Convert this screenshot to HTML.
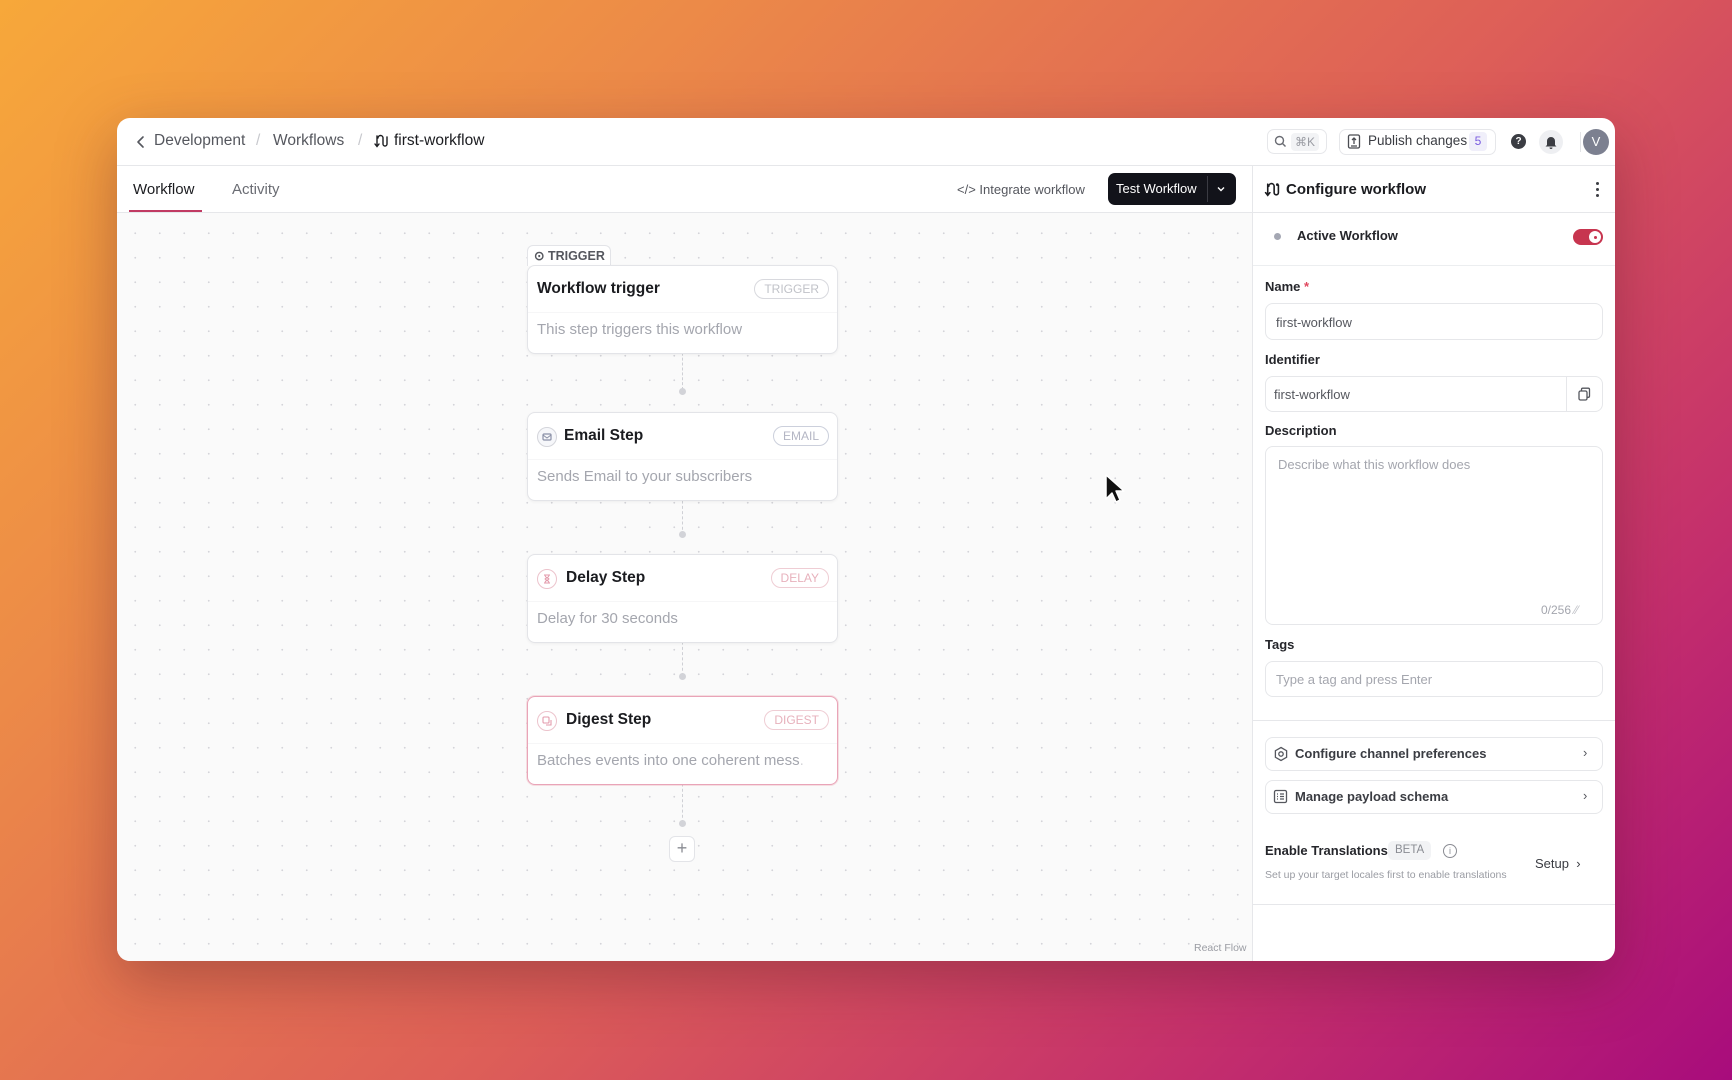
<!DOCTYPE html>
<html><head><meta charset="utf-8"><style>
*{box-sizing:border-box;margin:0;padding:0}
body{width:1732px;height:1080px;overflow:hidden;position:relative;font-family:"Liberation Sans",sans-serif;
background:linear-gradient(135deg,#f7a83a 0%,#ec8a48 25%,#dd5e58 55%,#c42f6c 80%,#a80c7c 100%);}
.a{position:absolute}
.win{position:absolute;left:117px;top:118px;width:1498px;height:843px;background:#fff;border-radius:13px;overflow:hidden;box-shadow:0 20px 60px rgba(80,20,40,.35)}
.t{position:absolute;white-space:nowrap}
.canvas{position:absolute;left:0;top:95px;width:1135px;height:748px;overflow:hidden;background-color:#fafafa;
background-image:radial-gradient(circle,#d4d4d9 0.8px,transparent 1.1px);background-size:24.5px 24.5px;background-position:6px 8px}
.card{position:absolute;left:410px;width:311px;height:89px;background:#fff;border:1px solid #e3e4e8;border-radius:8px;box-shadow:0 1px 3px rgba(0,0,0,.05)}
.card .ti{position:absolute;left:9px;top:14px;font-size:15.5px;font-weight:bold;color:#1b1c20}
.card .de{position:absolute;left:9px;top:55px;font-size:15px;color:#a4a6ae}
.card .bd{position:absolute;right:8px;top:13px;height:20px;padding:0 9px;border:1px solid #d8d9de;border-radius:10px;font-size:12px;line-height:18px;color:#c0c2c8}
.card .ic{position:absolute;left:9px;top:14px;width:20px;height:20px;border:1px solid #d4d5db;border-radius:50%}
.card .ic svg{position:absolute;left:4px;top:4px}
.card .sep{position:absolute;left:0;right:0;top:46px;height:1px;background:#f6f6f7}
.vl{position:absolute;left:565px;width:0;border-left:1.5px dashed #cfd0d5}
.dot{position:absolute;left:562px;width:7px;height:7px;border-radius:50%;background:#d2d3d8}
.lbl{position:absolute;left:1148px;font-size:13px;font-weight:bold;color:#25262b}
.inp{position:absolute;left:1148px;width:338px;border:1px solid #e6e7ea;border-radius:8px;background:#fff;font-size:13px;color:#55575e}
</style></head><body>
<div class="win">
 <svg class="a" style="left:17px;top:16px" width="14" height="16" viewBox="0 0 14 16"><path d="M9 3L4 8l5 5" fill="none" stroke="#55575e" stroke-width="1.6" stroke-linecap="round" stroke-linejoin="round"/></svg>
 <div class="t" style="left:37px;top:14px;font-size:15.5px;color:#55575e">Development</div>
 <div class="t" style="left:139px;top:14px;font-size:15.5px;color:#c7c8cd">/</div>
 <div class="t" style="left:156px;top:14px;font-size:15.5px;color:#55575e">Workflows</div>
 <div class="t" style="left:241px;top:14px;font-size:15.5px;color:#c7c8cd">/</div>
 <svg class="a" style="left:257px;top:16px" width="14" height="15" viewBox="0 0 14 15"><path d="M3 2v10M1 10l2 2.5L5 10M4 4a2.5 2.5 0 015 0v6a2 2 0 004 0V3" fill="none" stroke="#1b1c20" stroke-width="1.4" stroke-linecap="round"/></svg>
 <div class="t" style="left:277px;top:14px;font-size:15.5px;color:#1b1c20">first-workflow</div>
 <div class="a" style="left:1150px;top:11px;width:60px;height:25px;border:1px solid #e6e7ea;border-radius:7px"></div>
 <svg class="a" style="left:1157px;top:17px" width="13" height="13" viewBox="0 0 13 13"><circle cx="5.5" cy="5.5" r="4" fill="none" stroke="#6a6c73" stroke-width="1.4"/><path d="M8.5 8.5l3 3" stroke="#6a6c73" stroke-width="1.4"/></svg>
 <div class="t" style="left:1174px;top:15px;width:28px;height:18px;background:#f2f3f5;border-radius:4px;font-size:12px;color:#9a9ca3;text-align:center;line-height:18px">⌘K</div>
 <div class="a" style="left:1222px;top:11px;width:157px;height:26px;border:1px solid #e6e7ea;border-radius:7px"></div>
 <svg class="a" style="left:1230px;top:16px" width="14" height="16" viewBox="0 0 14 16"><rect x="1.5" y="1" width="11" height="13" rx="1.5" fill="none" stroke="#4a4c52" stroke-width="1.3"/><path d="M7 10V4M5 6l2-2 2 2M4 12h6" fill="none" stroke="#4a4c52" stroke-width="1.3"/></svg>
 <div class="t" style="left:1251px;top:15px;font-size:13.5px;color:#3a3c42">Publish changes</div>
 <div class="t" style="left:1352px;top:14px;width:18px;height:19px;background:#f0effa;border-radius:4px;font-size:12px;color:#7a5ce0;text-align:center;line-height:19px">5</div>
 <div class="a" style="left:1394px;top:16px;width:15px;height:15px;border-radius:50%;background:#3b3d43;color:#fff;font-size:10px;font-weight:bold;text-align:center;line-height:15px">?</div>
 <div class="a" style="left:1422px;top:12px;width:24px;height:24px;border-radius:50%;background:#eeeff2"></div>
 <svg class="a" style="left:1427px;top:16px" width="14" height="15" viewBox="0 0 14 15"><path d="M3 11V7a4 4 0 018 0v4l1.5 1.5h-11z M5.5 13.5a1.5 1.5 0 003 0" fill="#3b3d43"/></svg>
 <div class="a" style="left:1463px;top:14px;width:1px;height:20px;background:#e3e4e7"></div>
 <div class="a" style="left:1466px;top:11px;width:26px;height:26px;border-radius:50%;background:#7c8090;color:#fff;font-size:13px;text-align:center;line-height:26px">V</div>
 <div class="a" style="left:0;top:47px;width:1498px;height:1px;background:#e6e7ea"></div>
 <div class="t" style="left:16px;top:63px;font-size:15px;color:#1b1c20">Workflow</div>
 <div class="a" style="left:12px;top:92px;width:73px;height:2px;background:#c13b63"></div>
 <div class="t" style="left:115px;top:63px;font-size:15px;color:#6a6c73">Activity</div>
 <div class="t" style="left:840px;top:64px;font-size:13px;color:#55575e">&lt;/&gt; Integrate workflow</div>
 <div class="a" style="left:991px;top:55px;width:128px;height:32px;background:#12131a;border-radius:7px"></div>
 <div class="t" style="left:999px;top:63px;font-size:13px;color:#fff">Test Workflow</div>
 <div class="a" style="left:1090px;top:58px;width:1px;height:26px;background:#3a3b43"></div>
 <svg class="a" style="left:1099px;top:66px" width="10" height="10" viewBox="0 0 10 10"><path d="M2 3.5l3 3 3-3" fill="none" stroke="#fff" stroke-width="1.4"/></svg>
 <div class="a" style="left:0;top:94px;width:1135px;height:1px;background:#e6e7ea"></div>
 <div class="canvas">
  <div class="vl" style="top:130px;height:47px"></div>
  <div class="vl" style="top:272px;height:50px"></div>
  <div class="vl" style="top:413px;height:50px"></div>
  <div class="vl" style="top:555px;height:55px"></div>
  <div class="dot" style="top:126px"></div><div class="dot" style="top:175px"></div>
  <div class="dot" style="top:268px"></div><div class="dot" style="top:318px"></div>
  <div class="dot" style="top:409px"></div><div class="dot" style="top:460px"></div>
  <div class="dot" style="top:551px"></div><div class="dot" style="top:607px"></div>
  <div class="a" style="left:410px;top:32px;width:84px;height:21px;background:#fff;border:1px solid #e3e4e8;border-bottom:none;border-radius:6px 6px 0 0"></div>
  <div class="t" style="left:417px;top:35px;font-size:12.5px;font-weight:bold;color:#55575e">⊙ TRIGGER</div>
  <div class="card" style="top:52px"><div class="ti">Workflow trigger</div><div class="sep"></div><div class="de">This step triggers this workflow</div><div class="bd">TRIGGER</div></div>
  <div class="card" style="top:199px"><div class="ic" style="background:#f6f7fa"><svg width="10" height="10" viewBox="0 0 10 10"><rect x="1" y="2" width="8" height="6" rx="1" fill="none" stroke="#8a90a6" stroke-width="1.2"/><path d="M1 3l4 3 4-3" fill="none" stroke="#8a90a6" stroke-width="1"/></svg></div><div class="ti" style="left:36px">Email Step</div><div class="sep"></div><div class="de">Sends Email to your subscribers</div><div class="bd" style="color:#b4b6c4;border-color:#ccd0dc">EMAIL</div></div>
  <div class="card" style="top:341px"><div class="ic" style="border-color:#ecc3cc"><svg width="10" height="10" viewBox="0 0 10 10"><path d="M2 1h6M2 9h6M3 1c0 3 4 3 4 4s-4 1-4 4M7 1c0 3-4 3-4 4s4 1 4 4" fill="none" stroke="#e39aab" stroke-width="1"/></svg></div><div class="ti" style="left:38px">Delay Step</div><div class="sep"></div><div class="de">Delay for 30 seconds</div><div class="bd" style="color:#e7b1bc;border-color:#efcdd4">DELAY</div></div>
  <div class="card" style="top:483px;border-color:#e9a4b8;box-shadow:0 0 0 1px rgba(230,140,150,.25)"><div class="ic" style="border-color:#ecc3cc"><svg width="10" height="10" viewBox="0 0 10 10"><rect x="1" y="1" width="6" height="6" rx="1" fill="none" stroke="#e39aab" stroke-width="1.1"/><path d="M4 9h5V4" fill="none" stroke="#e39aab" stroke-width="1.1"/></svg></div><div class="ti" style="left:38px">Digest Step</div><div class="sep"></div><div class="de">Batches events into one coherent mess<span style="color:#d5d6da">.</span></div><div class="bd" style="color:#e7b1bc;border-color:#efcdd4">DIGEST</div></div>
  <div class="a" style="left:552px;top:623px;width:26px;height:26px;background:#fff;border:1px solid #e3e4e8;border-radius:6px;text-align:center;line-height:23px;font-size:18px;color:#8a8c93">+</div>
 </div>
 <div class="t" style="left:1077px;top:824px;font-size:10.5px;color:#9a9ca3">React Flow</div>
 <svg class="a" style="left:987px;top:355px" width="22" height="32" viewBox="0 0 22 32"><path d="M2 2v24l6-6 4 9 4-2-4-9h8z" fill="#111" stroke="#fff" stroke-width="1.5" stroke-linejoin="round"/></svg>
 <div class="a" style="left:1135px;top:48px;width:1px;height:795px;background:#e6e7ea"></div>
 <svg class="a" style="left:1147px;top:64px" width="16" height="16" viewBox="0 0 14 15"><path d="M3 2v10M1 10l2 2.5L5 10M4 4a2.5 2.5 0 015 0v6a2 2 0 004 0V3" fill="none" stroke="#1b1c20" stroke-width="1.5" stroke-linecap="round"/><circle cx="12" cy="2.5" r="1.3" fill="#1b1c20"/></svg>
 <div class="t" style="left:1169px;top:63px;font-size:15px;font-weight:bold;color:#1b1c20">Configure workflow</div>
 <div class="a" style="left:1479px;top:64px;width:3px;height:3px;border-radius:50%;background:#3b3d43"></div>
 <div class="a" style="left:1479px;top:70px;width:3px;height:3px;border-radius:50%;background:#3b3d43"></div>
 <div class="a" style="left:1479px;top:76px;width:3px;height:3px;border-radius:50%;background:#3b3d43"></div>
 <div class="a" style="left:1136px;top:94px;width:362px;height:1px;background:#e6e7ea"></div>
 <div class="a" style="left:1157px;top:115px;width:7px;height:7px;border-radius:50%;background:#a4a7b3"></div>
 <div class="t" style="left:1180px;top:110px;font-size:13px;font-weight:bold;color:#25262b">Active Workflow</div>
 <div class="a" style="left:1456px;top:111px;width:30px;height:16px;border-radius:8px;background:#c7354f"></div>
 <div class="a" style="left:1472px;top:113px;width:12px;height:12px;border-radius:50%;background:#fff"></div>
 <div class="a" style="left:1477px;top:118px;width:3px;height:3px;border-radius:50%;background:#c7354f"></div>
 <div class="a" style="left:1136px;top:147px;width:362px;height:1px;background:#eceef0"></div>
 <div class="lbl" style="top:161px">Name <span style="color:#e0475e">*</span></div>
 <div class="inp" style="top:185px;height:37px;padding:11px 0 0 10px">first-workflow</div>
 <div class="lbl" style="top:234px">Identifier</div>
 <div class="inp" style="top:258px;height:36px;padding:10px 0 0 8px">first-workflow</div>
 <div class="a" style="left:1449px;top:258px;width:1px;height:36px;background:#e6e7ea"></div>
 <svg class="a" style="left:1460px;top:269px" width="14" height="14" viewBox="0 0 14 14"><rect x="2" y="4" width="8" height="9" rx="1.5" fill="none" stroke="#55575e" stroke-width="1.3"/><path d="M4.5 4V2.5A1.3 1.3 0 015.8 1.2h5.4a1.3 1.3 0 011.3 1.3v6.5A1.3 1.3 0 0111.2 10.3H10" fill="none" stroke="#55575e" stroke-width="1.3"/></svg>
 <div class="lbl" style="top:305px">Description</div>
 <div class="inp" style="top:328px;height:179px;padding:10px 0 0 12px;color:#a4a6ae">Describe what this workflow does</div>
 <div class="t" style="left:1424px;top:485px;font-size:12px;color:#a4a6ae">0/256 <span style="color:#c0c2c8">⁄⁄</span></div>
 <div class="lbl" style="top:519px">Tags</div>
 <div class="inp" style="top:543px;height:36px;padding:10px 0 0 10px;color:#a4a6ae">Type a tag and press Enter</div>
 <div class="a" style="left:1136px;top:602px;width:362px;height:1px;background:#e6e7ea"></div>
 <div class="inp" style="top:619px;height:34px"></div>
 <svg class="a" style="left:1156px;top:628px" width="16" height="16" viewBox="0 0 16 16"><path d="M8 1.5l5.6 3.2v6.6L8 14.5l-5.6-3.2V4.7z" fill="none" stroke="#55575e" stroke-width="1.3"/><circle cx="8" cy="8" r="2.2" fill="none" stroke="#55575e" stroke-width="1.3"/></svg>
 <div class="t" style="left:1178px;top:628px;font-size:13px;font-weight:bold;color:#3a3c42">Configure channel preferences</div>
 <div class="t" style="left:1466px;top:627px;font-size:13px;color:#55575e">›</div>
 <div class="inp" style="top:662px;height:34px"></div>
 <svg class="a" style="left:1156px;top:671px" width="15" height="15" viewBox="0 0 15 15"><rect x="1.5" y="1.5" width="12" height="12" rx="1.5" fill="none" stroke="#55575e" stroke-width="1.3"/><path d="M4 5h1M7 5h4M4 7.5h1M7 7.5h4M4 10h1M7 10h4" stroke="#55575e" stroke-width="1.2"/></svg>
 <div class="t" style="left:1178px;top:671px;font-size:13px;font-weight:bold;color:#3a3c42">Manage payload schema</div>
 <div class="t" style="left:1466px;top:670px;font-size:13px;color:#55575e">›</div>
 <div class="t" style="left:1148px;top:725px;font-size:13px;font-weight:bold;color:#25262b">Enable Translations</div>
 <div class="t" style="left:1271px;top:723px;height:19px;padding:0 7px;background:#f2f3f5;border-radius:5px;font-size:11.5px;color:#8a8c93;line-height:19px">BETA</div>
 <div class="a" style="left:1326px;top:726px;width:14px;height:14px;border:1px solid #8a8c93;border-radius:50%;font-size:9px;color:#8a8c93;text-align:center;line-height:12px">i</div>
 <div class="t" style="left:1148px;top:751px;font-size:10.5px;color:#9a9ca3">Set up your target locales first to enable translations</div>
 <div class="t" style="left:1418px;top:738px;font-size:13px;color:#3a3c42">Setup&nbsp;&nbsp;›</div>
 <div class="a" style="left:1136px;top:786px;width:362px;height:1px;background:#e6e7ea"></div>
</div>
</body></html>
